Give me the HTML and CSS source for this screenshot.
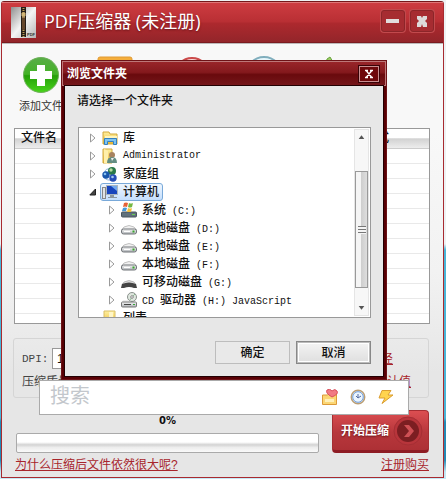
FILE: index.html
```html
<!DOCTYPE html>
<html lang="zh-CN">
<head>
<meta charset="utf-8">
<title>PDF压缩器</title>
<link rel="stylesheet" href="styles.css">
</head>
<body>
<svg class="defs" aria-hidden="true">
  <defs>
    <linearGradient id="green" x1="0" y1="0" x2="0" y2="1"><stop offset="0" stop-color="#59ad47"/><stop offset=".48" stop-color="#43b226"/><stop offset=".52" stop-color="#249f08"/><stop offset="1" stop-color="#49d41c"/></linearGradient>
    <linearGradient id="metal" x1="0" y1="0" x2="0" y2="1"><stop offset="0" stop-color="#f6f6f6"/><stop offset="1" stop-color="#aeb2b6"/></linearGradient>
    <linearGradient id="gold" x1="0" y1="0" x2="0" y2="1"><stop offset="0" stop-color="#fff0a0"/><stop offset="1" stop-color="#eab62e"/></linearGradient>
    <linearGradient id="silver" x1="0" y1="0" x2="1" y2="1"><stop offset="0" stop-color="#8f8f8f"/><stop offset=".5" stop-color="#f4f4f4"/><stop offset="1" stop-color="#b5b5b5"/></linearGradient>
    <symbol id="closed" viewBox="0 0 8 10"><path d="M1.500 1v8l4.500-4z" fill="#fff" stroke="#9a9a9a"/></symbol>
    <symbol id="open" viewBox="0 0 8 10"><path d="M6.500 2v6H.8z" fill="#444" stroke="#222"/></symbol>
    <symbol id="drive" viewBox="0 0 16 16"><path d="M3 7q5-3 10 0l2.500 3H.5z" fill="#f1f1f1" stroke="#a9a9a9" stroke-width=".7"/><rect x=".5" y="9" width="15" height="5" rx="2" fill="url(#metal)" stroke="#707478"/><path d="M3 11.500h6" stroke="#fff"/><rect x="11.500" y="10.500" width="2" height="2" fill="#39a62d"/></symbol>
  </defs>
</svg>

<main class="app">
  <header class="titlebar">
    <svg class="logo" viewBox="0 0 25 31"><rect width="25" height="31" fill="url(#silver)"/><rect x="10" width="5" height="30" fill="#241d18"/><path d="M12.500 1v6M12.500 23v7" stroke="#bd9a54" stroke-width="2" stroke-dasharray="1 1"/><rect x="11" y="7" width="3" height="16" rx="1" fill="#65472c"/><path d="M11 6h3v3h-3zM11 10h3" fill="#d1b477" stroke="#d1b477"/><text x="16" y="29" class="logo-text">PDF</text></svg>
    <h1>PDF压缩器 (未注册)</h1>
    <div class="window-buttons">
      <button aria-label="最小化"><svg viewBox="0 0 22 20"><path d="M4 8h13v4H4z" fill="#e1dddd"/></svg></button>
      <button aria-label="关闭"><svg viewBox="0 0 22 20"><path d="M6 5h4l1 2 1-2h4v3l-2 2 2 2v4h-4l-1-3-1 3H6v-4l2-2-2-2z" fill="#dedada"/></svg></button>
    </div>
  </header>

  <nav class="toolbar">
    <button><svg viewBox="0 0 38 38"><circle cx="19" cy="19" r="17.500" fill="url(#green)" stroke="#6eb05a"/><path d="M15 9h8v6h7v8h-7v7h-8v-7H8v-8h7z" fill="#fff"/></svg>添加文件</button>
    <button><svg viewBox="0 0 38 38"><rect x="2" y="1" width="34" height="32" rx="2" fill="#f5ae3b" stroke="#e19a34"/></svg>添加目录</button>
    <button><svg viewBox="0 0 38 38"><circle cx="22" cy="19" r="17" fill="#f8dddd" stroke="#cb4a4a" stroke-width="2"/></svg>移除</button>
    <button><svg viewBox="0 0 38 38"><circle cx="20" cy="19" r="18" fill="#e8f6fb" stroke="#80aebd" stroke-width="2"/></svg>清空</button>
    <button><svg viewBox="0 0 38 38"><path d="M9 3l3-2 3 5 8 20H5z" fill="#9ccc66" stroke="#69a33c"/></svg>设置</button>
  </nav>

  <div class="files">
    <table>
      <thead><tr><th>文件名</th><th class="format">格式</th></tr></thead>
      <tbody>
        <tr><td colspan="2"></td></tr><tr><td colspan="2"></td></tr><tr><td colspan="2"></td></tr>
        <tr><td colspan="2"></td></tr><tr><td colspan="2"></td></tr><tr><td colspan="2"></td></tr>
        <tr><td colspan="2"></td></tr><tr><td colspan="2"></td></tr><tr><td colspan="2"></td></tr>
        <tr><td colspan="2"></td></tr><tr><td colspan="2"></td></tr><tr><td colspan="2"></td></tr>
      </tbody>
    </table>
  </div>

  <section class="options">
    <div class="option"><label for="dpi" class="mono">DPI:</label><input id="dpi" value="144"><a href="#" class="path">打开路径</a></div>
    <div class="option"><span>压缩质量</span><a href="#">默认值</a></div>
  </section>

  <section class="run">
    <div class="progress">
      <span id="percent">0%</span>
      <div class="track" role="progressbar" aria-labelledby="percent" aria-valuenow="0"></div>
    </div>
    <button class="start"><span>开始压缩</span><svg viewBox="0 0 30 30"><circle cx="15" cy="15" r="14" fill="#b8353b" stroke="#a52e34"/><circle cx="15" cy="15" r="11" fill="#7c1e22"/><path d="M11 9h5l5 6-5 6h-5l5-6z" fill="#cf5055"/></svg></button>
  </section>

  <footer><a href="#">为什么压缩后文件依然很大呢?</a><a href="#">注册购买</a></footer>
</main>

<section class="dialog" role="dialog" aria-labelledby="dialog-title">
  <header class="dialog-title"><h2 id="dialog-title">浏览文件夹</h2><button aria-label="关闭"><svg viewBox="0 0 16 12"><path d="M4 2.500h3M9 2.500h3M4 9.500h3M9 9.500h3M5.500 3l5 6M10.500 3l-5 6" stroke="#fff" stroke-width="1.300"/></svg></button></header>
  <div class="dialog-body">
    <p>请选择一个文件夹</p>
    <div class="browser">
      <ul class="tree">
        <li><svg class="arrow"><use href="#closed"/></svg><svg class="icon" viewBox="0 0 16 16"><path d="M1 2h6l1 2h7v10H1z" fill="url(#gold)" stroke="#d2a83b"/><path d="M3 6h12v2H3z" fill="#fff5bc"/><path d="M2.500 8.500h12v6h-3v-3h-6v3h-3z" fill="#7dc4f2" stroke="#3480c1"/></svg><span>库</span></li>
        <li><svg class="arrow"><use href="#closed"/></svg><svg class="icon" viewBox="0 0 16 16"><path d="M1 1h9v14H1z" fill="url(#gold)" stroke="#cfa63d"/><path d="M2 1l4 2v13l-4-1z" fill="#ffefaa"/><circle cx="10" cy="7" r="3" fill="#a78360"/><path d="M5 15q0-6 5-6t5 6z" fill="#648e83"/><path d="M9 10l1 3 2-3" fill="#eee"/></svg><span class="mono">Administrator</span></li>
        <li><svg class="arrow"><use href="#closed"/></svg><svg class="icon" viewBox="0 0 16 16"><path d="M3 6q0-4 7-3M2 11q2 4 9 3" fill="none" stroke="#8bb6df"/><circle cx="10" cy="5" r="4" fill="#2b7949"/><circle cx="9" cy="4" r="1.700" fill="#b4dc9f"/><circle cx="4" cy="9" r="3.700" fill="#1957ab"/><circle cx="3" cy="8" r="1.300" fill="#84bfef"/><circle cx="11" cy="12" r="3.700" fill="#264db6"/><circle cx="10.500" cy="11" r="1.300" fill="#a7c9ef"/></svg><span>家庭组</span></li>
        <li><svg class="arrow"><use href="#open"/></svg><span class="selected"><svg class="icon" viewBox="0 0 16 16"><rect x=".5" y="3.500" width="3" height="11" fill="#e0e3e6" stroke="#888"/><rect x="4.500" y="1.500" width="11" height="9" fill="#1744bc" stroke="#a9b5c0"/><path d="M9 2h6v5z" fill="#6fa7ef"/><path d="M8 11h4v2h3v1H6v-1h2z" fill="#8b969e"/></svg><span>计算机</span></span>
          <ul>
            <li><svg class="arrow"><use href="#closed"/></svg><svg class="icon" viewBox="0 0 16 16"><rect x=".5" y="10" width="15" height="5" rx="1" fill="#60717c" stroke="#4a565e"/><path d="M11 12.500h3" stroke="#69cf54"/><path d="M3 1q2-1 4 0L6 5q-2-1-4 0z" fill="#e66236"/><path d="M8 1q2 1 4 0l-1 4q-2 1-4 0z" fill="#75b842"/><path d="M2 6q2-1 4 0l-1 3H1z" fill="#4699d8"/><path d="M7 6q2 1 4 0l-1 4H6z" fill="#f1bf38"/></svg><span>系统<span class="mono"> (C:)</span></span></li>
            <li><svg class="arrow"><use href="#closed"/></svg><svg class="icon"><use href="#drive"/></svg><span>本地磁盘<span class="mono"> (D:)</span></span></li>
            <li><svg class="arrow"><use href="#closed"/></svg><svg class="icon"><use href="#drive"/></svg><span>本地磁盘<span class="mono"> (E:)</span></span></li>
            <li><svg class="arrow"><use href="#closed"/></svg><svg class="icon"><use href="#drive"/></svg><span>本地磁盘<span class="mono"> (F:)</span></span></li>
            <li><svg class="arrow"><use href="#closed"/></svg><svg class="icon" viewBox="0 0 16 16"><path d="M3 8q5-3 10 0l2 3H1z" fill="#ddd" stroke="#999" stroke-width=".6"/><path d="M1 10q7-3 14 0l1 4h-3q-5-2-10 0H0z" fill="#444"/></svg><span>可移动磁盘<span class="mono"> (G:)</span></span></li>
            <li><svg class="arrow"><use href="#closed"/></svg><svg class="icon" viewBox="0 0 16 16"><circle cx="11" cy="5" r="4.500" fill="#dfe7df" stroke="#8b928d"/><path d="M11 5l3-3M11 5l-2 3" stroke="#8fba94"/><circle cx="11" cy="5" r="1.300" fill="#fff" stroke="#888"/><path d="M2 8h5l3 2H1z" fill="#eee"/><rect x=".5" y="10" width="15" height="5" rx="1" fill="url(#metal)" stroke="#777"/><path d="M3 12.500h7" stroke="#444"/><path d="M12 12.500h2" stroke="#35a736"/></svg><span><span class="mono">CD </span>驱动器<span class="mono"> (H:) JavaScript</span></span></li>
          </ul>
        </li>
        <li><svg class="arrow"></svg><svg class="icon" viewBox="0 0 16 16"><path d="M2 1h11v14H2z" fill="url(#gold)" stroke="#d9bd67"/><path d="M7 2h4v10H7z" fill="#fff6c7"/></svg><span>列表</span></li>
      </ul>
      <div class="scrollbar" aria-hidden="true">
        <svg viewBox="0 0 14 15"><path d="M4 9l3-4 3 4z" fill="#555"/></svg>
        <div class="thumb"></div>
        <svg viewBox="0 0 14 15"><path d="M4 6l3 4 3-4z" fill="#555"/></svg>
      </div>
    </div>
    <div class="actions"><button>确定</button><button class="focused">取消</button></div>
  </div>
</section>

<form class="search">
  <input type="text" placeholder="搜索" aria-label="搜索">
  <button type="button" aria-label="收藏"><svg viewBox="0 0 16 16"><path d="M.5 6h5l1-1h8v10.500H.5z" fill="#fbd674" stroke="#dc9a38"/><path d="M3 10h9v3H3z" fill="#fff0b8"/><path d="M10 8Q3 4 5 1q3-2 5 1 3-3 5 0 2 3-5 6z" fill="#f17b84" stroke="#d84f5b"/></svg></button>
  <button type="button" aria-label="历史"><svg viewBox="0 0 16 16"><circle cx="8" cy="8" r="6.700" fill="#eaf5ff" stroke="#bb9e73" stroke-width="1.500"/><circle cx="8" cy="8" r="5.300" fill="none" stroke="#6e9ddc"/><path d="M8 5v4l3-2M8 9L6 7" fill="none" stroke="#5369a0"/></svg></button>
  <button type="button" aria-label="快速"><svg viewBox="0 0 16 16"><path d="M4 1.500h9L10 6h5L4 14.500 7 9H1z" fill="#ffd44e" stroke="#db9e31"/></svg></button>
</form>
</body>
</html>
```

FILE: styles.css
```css
* { box-sizing: border-box; }
body {
  position: relative;
  margin: 0;
  padding: 1px 2px 2px 1px;
  font: 12px/18px "Liberation Sans", "Noto Sans CJK SC", sans-serif;
  color: #111;
  background: linear-gradient(#eef2f4 0 244px, #49b5d8 250px 418px, #2489b5 422px 460px, #c3e8f5 472px);
}
h1, h2, p, ul { margin: 0; padding: 0; }
button, input { font: inherit; color: inherit; margin: 0; padding: 0; }
button { background: none; border: 0; }
svg { display: block; flex: none; }
a { color: #a8252c; }
.defs { position: absolute; width: 0; height: 0; }
.mono { font-family: "Liberation Mono", monospace; font-size: 10px; }

.app {
  border: 1px solid #a82a30;
  border-top-color: #76171a;
  border-radius: 3px 3px 0 0;
  background: linear-gradient(#f8f8f8 0 130px, #f2f2f2 270px, #e6e6e6 370px);
}
.titlebar {
  display: flex;
  align-items: center;
  height: 41px;
  padding: 0 9px;
  border-top: 1px solid #df7677;
  border-bottom: 1px solid #7b1b20;
  background: linear-gradient(#cd3c41, #b92f34 48%, #ad292e 52%, #93252a);
  box-shadow: 0 1px #bdb9b9;
}
.logo { width: 25px; height: 31px; }
.logo-text { font: bold 4px "Liberation Sans", sans-serif; fill: #333; }
h1 {
  flex: 1;
  margin-left: 8px;
  padding-bottom: 3px;
  font: 18px/28px "Open Sans", "Noto Sans CJK SC", sans-serif;
  color: #fff;
  text-shadow: 0 1px 2px #6b1519;
}
.window-buttons { display: flex; gap: 5px; padding-bottom: 3px; }
.window-buttons button {
  width: 24px;
  height: 22px;
  border: 1px solid #8c2529;
  border-radius: 3px;
  background: #a62c31;
  box-shadow: 0 0 0 1px #c24a4d;
}
.window-buttons svg { width: 22px; height: 20px; }

.toolbar { display: flex; height: 85px; padding: 13px 0 0 2px; }
.toolbar button {
  display: flex;
  flex-direction: column;
  align-items: center;
  width: 74px;
  font-size: 11px;
  color: #333;
}
.toolbar svg { width: 38px; height: 38px; margin-bottom: 3px; }

.files {
  height: 196px;
  margin: 0 13px 0 12px;
  overflow: hidden;
  border: 1px solid #999;
  background: #fff;
}
table { width: 100%; border-collapse: collapse; }
th {
  height: 19px;
  padding: 0 6px;
  line-height: 18px;
  text-align: left;
  font-weight: 500;
  border-bottom: 1px solid #ccc;
  background: linear-gradient(#fff 0 45%, #d2d2d2 52%, #ededed);
}
th.format { text-align: right; padding-right: 40px; }
td { height: 15px; padding: 0; border-bottom: 1px solid #e9e9e9; }

.options {
  height: 60px;
  margin: 14px 14px 0 11px;
  padding: 8px 8px 0;
  border: 1px solid #d5d5d5;
  border-radius: 3px;
  color: #444;
}
.option { display: flex; align-items: center; height: 23px; padding-right: 9px; }
.option a { margin-left: auto; }
.option .path { margin-right: 18px; }
.option .mono { width: 30px; font-size: 11px; }
.option input { width: 50px; height: 21px; padding: 0 4px; border: 1px solid #999; background: #fff; color: #111; }

.run { display: flex; align-items: flex-end; gap: 13px; padding: 12px 14px 0 14px; }
.progress { flex: 1; text-align: center; }
.progress span { display: block; font: bold 10px/14px "DejaVu Sans", sans-serif; margin-bottom: 5px; }
.track {
  height: 20px;
  border: 1px solid #aaa;
  border-radius: 2px;
  background: linear-gradient(#fff 0 45%, #d3d3d3 60%, #ededed 75%, #fafafa);
}
.start {
  display: flex;
  align-items: center;
  justify-content: space-between;
  width: 97px;
  height: 43px;
  padding: 0 5px 0 8px;
  border: 1px solid #a52d32;
  border-bottom: 3px solid #8e1c24;
  border-radius: 4px;
  background: linear-gradient(#dc4e51, #b7373c 55%, #ad3035);
  color: #fff;
  font-weight: bold;
  text-shadow: 0 1px 2px #651518;
}
.start svg { width: 30px; height: 30px; }
footer { display: flex; justify-content: space-between; height: 24px; padding: 3px 14px 0 13px; }

.dialog {
  position: absolute;
  top: 60px;
  left: 61px;
  width: 326px;
  border: 1px solid #6d1216;
  background: #580004;
}
.dialog-title {
  display: flex;
  justify-content: space-between;
  align-items: center;
  height: 25px;
  padding: 0 6px 0 4px;
  border: 1px solid #bd7778;
  background: linear-gradient(#982529, #84191d 45%, #690a0d 55%, #74161a);
}
h2 { font-size: 12px; line-height: 22px; color: #fff; }
.dialog-title button {
  width: 20px;
  height: 16px;
  padding: 1px;
  border: 1px solid #c98e90;
  outline: 1px solid #390307;
  background: #6e080b;
}
.dialog-title svg { width: 16px; height: 12px; }
.dialog-body {
  margin: 0 3px 3px;
  padding: 6px 12px 12px;
  outline: 1px solid #220002;
  background: #e7e7e7;
}
.dialog-body p { margin-bottom: 17px; font-weight: 500; }
.browser {
  display: flex;
  justify-content: space-between;
  height: 191px;
  margin-left: 1px;
  padding: 1px 1px 1px 10px;
  overflow: hidden;
  border: 1px solid #999;
  background: #fff;
}
ul { list-style: none; }
.tree li { display: grid; grid-template-columns: 13px 16px 1fr; align-items: center; font-weight: 500; }
.tree li > span { height: 18px; padding-left: 5px; white-space: pre; }
.tree li ul { grid-column: 1 / -1; padding-left: 19px; }
.arrow { width: 8px; height: 10px; }
.icon { width: 16px; height: 16px; }
.tree li > .selected {
  grid-column: 2 / -1;
  justify-self: start;
  display: flex;
  align-items: center;
  gap: 5px;
  margin-left: -2px;
  padding: 0 3px 0 1px;
  border: 1px solid #79a9d9;
  border-radius: 3px;
  background: linear-gradient(#eef6ff, #c5defc);
}
.scrollbar { display: flex; flex-direction: column; width: 15px; border: 1px solid #e5e5e5; background: #f7f7f7; }
.scrollbar > svg { width: 13px; height: 15px; }
.thumb {
  flex: 1;
  margin: 26px 0 12px;
  border: 1px solid #999;
  background:
    repeating-linear-gradient(#777 0 1px, #f5f5f5 1px 3px) center / 8px 8px no-repeat,
    linear-gradient(90deg, #f5f5f5 45%, #cfcfcf 50%, #dedede);
}
.actions { display: flex; justify-content: flex-end; gap: 6px; margin-top: 23px; }
.actions button { width: 75px; height: 23px; border: 1px solid #bdbdbd; background: #e9e9e9; font-weight: 500; }
.actions .focused {
  border: 1px solid #888;
  background: linear-gradient(#f4f4f4, #dedede);
  box-shadow: inset 0 0 0 1px #bbb, inset 0 0 0 2px #fff;
}

.search {
  position: absolute;
  top: 380px;
  left: 39px;
  display: flex;
  align-items: center;
  gap: 12px;
  width: 370px;
  height: 35px;
  padding: 0 14px 2px 10px;
  border: 1px solid #aaa;
  background: #fff;
}
.search input { flex: 1; min-width: 0; height: 30px; border: 0; outline: 0; background: none; font-size: 20px; }
.search input::placeholder { color: #c3c7cc; }
.search svg { width: 16px; height: 16px; }
```
